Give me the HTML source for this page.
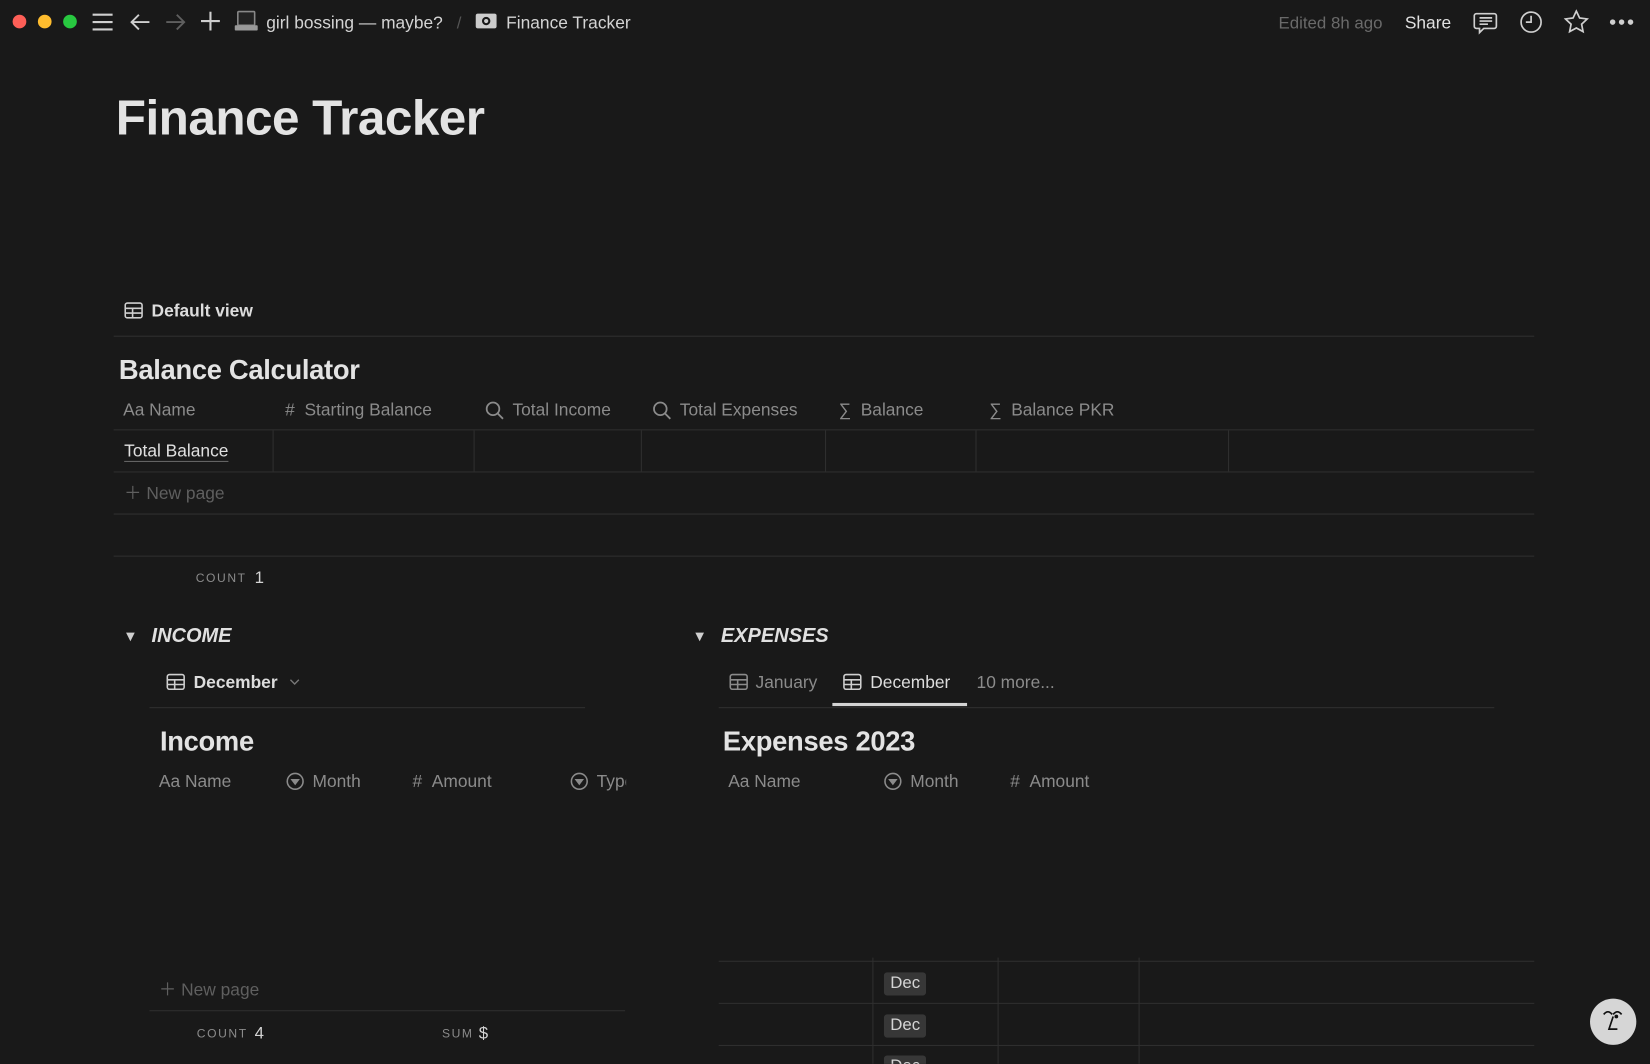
<!DOCTYPE html>
<html><head><meta charset="utf-8"><style>
html,body{margin:0;padding:0;background:#191919;width:1650px;height:1064px;overflow:hidden}
#w{position:absolute;left:0;top:0;width:1568px;height:1011px;overflow:hidden;transform:scale(1.05230);transform-origin:0 0;font-family:"Liberation Sans",sans-serif;color:#d4d4d4}
.a{position:absolute;white-space:nowrap;line-height:1.2;transform:translateY(2px)}
.m{color:#8b8b8b}
.hl{position:absolute;height:1px;background:#2f2f2f}
.vl{position:absolute;width:1px;background:#2f2f2f}
svg{position:absolute}
.dot{position:absolute;width:13px;height:13px;border-radius:50%}
.tag{position:absolute;background:#373737;border-radius:3px;color:#d4d4d4;font-size:16px;padding:2px 6px;line-height:18px;transform:translateY(2px)}
</style></head><body><div id="w">
<div class="dot" style="left:12px;top:14px;background:#fe5f57"></div>
<div class="dot" style="left:36px;top:14px;background:#febc2e"></div>
<div class="dot" style="left:60px;top:14px;background:#28c840"></div>
<svg style="left:87px;top:11px" width="21" height="20" stroke="#cfcfcf" stroke-width="2"><path d="M1 3h19M1 10h19M1 17h19"/></svg>
<svg style="left:123px;top:11px" width="20" height="20" fill="none" stroke="#cfcfcf" stroke-width="1.8"><path d="M19 10H2M9 3l-7 7 7 7"/></svg>
<svg style="left:157px;top:11px" width="20" height="20" fill="none" stroke="#5f5f5f" stroke-width="1.8"><path d="M1 10h17M11 3l7 7-7 7"/></svg>
<svg style="left:191px;top:11px" width="18" height="18" stroke="#cfcfcf" stroke-width="2"><path d="M9 0v18M0 9h18"/></svg>
<svg style="left:223px;top:9px" width="22" height="22"><rect x="3" y="2" width="16" height="13" rx="1" fill="#222" stroke="#888" stroke-width="1.5"/><rect x="0" y="15" width="22" height="5" rx="1" fill="#999"/></svg>
<div class="a" style="left:253px;top:11px;font-size:16.5px">girl bossing — maybe?</div>
<div class="a m" style="left:434px;top:11px;font-size:16px;color:#555">/</div>
<svg style="left:452px;top:12px" width="20" height="16"><rect x="0" y="1" width="20" height="14" rx="2" fill="#ccc"/><ellipse cx="10" cy="8" rx="4" ry="4" fill="#191919"/><circle cx="10" cy="8" r="2" fill="#ccc"/></svg>
<div class="a" style="left:481px;top:11px;font-size:16.5px">Finance Tracker</div>
<div class="a" style="left:1215px;top:11px;font-size:16px;color:#6a6a6a">Edited 8h ago</div>
<div class="a" style="left:1335px;top:11px;font-size:16.5px;color:#e0e0e0">Share</div>
<svg style="left:1400px;top:11px" width="24" height="22" fill="none" stroke="#cfcfcf" stroke-width="1.6"><path d="M3 2h17a2 2 0 0 1 2 2v10a2 2 0 0 1-2 2H10l-4 4v-4H3a2 2 0 0 1-2-2V4a2 2 0 0 1 2-2z"/><path d="M6 6h12M6 9h12M6 12h8"/></svg>
<svg style="left:1444px;top:10px" width="22" height="22" fill="none" stroke="#cfcfcf" stroke-width="1.6"><circle cx="11" cy="11" r="9.5"/><path d="M11 5v6H6"/></svg>
<svg style="left:1486px;top:9px" width="24" height="23" fill="none" stroke="#cfcfcf" stroke-width="1.6"><path d="M12 1.5l3.1 6.6 7.2.9-5.3 5 1.4 7.1L12 17.6l-6.4 3.5 1.4-7.1-5.3-5 7.2-.9z"/></svg>
<svg style="left:1529px;top:17px" width="24" height="8" fill="#cfcfcf"><circle cx="3.5" cy="4" r="2.6"/><circle cx="12" cy="4" r="2.6"/><circle cx="20.5" cy="4" r="2.6"/></svg>

<div class="a" style="left:110px;top:82px;font-size:47px;font-weight:bold;color:#e3e3e3;letter-spacing:-0.5px">Finance Tracker</div>

<svg style="left:118px;top:287px" width="18" height="16" fill="none" stroke="#cfcfcf" stroke-width="1.5"><rect x="1" y="1" width="16" height="14" rx="2"/><path d="M1 6h16M1 10.5h16M8 6v9"/></svg>
<div class="a" style="left:144px;top:285px;font-size:16.5px;font-weight:bold;color:#ddd">Default view</div>
<div class="hl" style="left:108px;top:319px;width:1350px"></div>

<div class="a" style="left:113px;top:334px;font-size:26px;font-weight:bold;color:#e3e3e3;letter-spacing:-0.3px">Balance Calculator</div>
<div class="a m" style="left:117px;top:379px;font-size:16.5px">Aa Name</div>
<div class="a m" style="left:271px;top:379px;font-size:16.5px"># &nbsp;Starting Balance</div>
<svg style="left:461px;top:381px" width="18" height="18" fill="none" stroke="#8b8b8b" stroke-width="1.7"><circle cx="7.5" cy="7.5" r="6"/><path d="M12 12l5 5"/></svg>
<div class="a m" style="left:487px;top:379px;font-size:16.5px">Total Income</div>
<svg style="left:620px;top:381px" width="18" height="18" fill="none" stroke="#8b8b8b" stroke-width="1.7"><circle cx="7.5" cy="7.5" r="6"/><path d="M12 12l5 5"/></svg>
<div class="a m" style="left:646px;top:379px;font-size:16.5px">Total Expenses</div>
<div class="a m" style="left:797px;top:379px;font-size:16.5px">∑ &nbsp;Balance</div>
<div class="a m" style="left:940px;top:379px;font-size:16.5px">∑ &nbsp;Balance PKR</div>
<div class="hl" style="left:108px;top:408px;width:1350px"></div>
<div class="vl" style="left:259px;top:409px;height:39px"></div>
<div class="vl" style="left:450px;top:409px;height:39px"></div>
<div class="vl" style="left:609px;top:409px;height:39px"></div>
<div class="vl" style="left:784px;top:409px;height:39px"></div>
<div class="vl" style="left:927px;top:409px;height:39px"></div>
<div class="vl" style="left:1167px;top:409px;height:39px"></div>
<div class="a" style="left:118px;top:418px;font-size:16.5px;color:#e0e0e0;text-decoration:underline;text-decoration-color:#666;text-underline-offset:4px">Total Balance</div>
<div class="hl" style="left:108px;top:448px;width:1350px"></div>
<div class="a" style="left:118px;top:458px;font-size:16.5px;color:#5f5f5f">＋ New page</div>
<div class="hl" style="left:108px;top:488px;width:1350px"></div>
<div class="hl" style="left:108px;top:528px;width:1350px"></div>
<div class="a" style="left:186px;top:542px;font-size:11.5px;letter-spacing:1.5px;color:#8b8b8b">COUNT</div>
<div class="a" style="left:242px;top:538px;font-size:16px;color:#d4d4d4">1</div>

<div class="a" style="left:117px;top:594px;font-size:14px;color:#cfcfcf">▼</div>
<div class="a" style="left:144px;top:592px;font-size:19px;font-weight:bold;font-style:italic;color:#e0e0e0">INCOME</div>
<svg style="left:158px;top:640px" width="18" height="16" fill="none" stroke="#cfcfcf" stroke-width="1.5"><rect x="1" y="1" width="16" height="14" rx="2"/><path d="M1 6h16M1 10.5h16M8 6v9"/></svg>
<div class="a" style="left:184px;top:638px;font-size:16.5px;font-weight:bold;color:#ddd">December</div>
<svg style="left:275px;top:645px" width="10" height="7" fill="none" stroke="#777" stroke-width="1.3"><path d="M1 1l4 4 4-4"/></svg>
<div class="hl" style="left:142px;top:672px;width:414px"></div>
<div class="a" style="left:152px;top:687px;font-size:26px;font-weight:bold;color:#e3e3e3;letter-spacing:-0.3px">Income</div>
<div class="a m" style="left:151px;top:732px;font-size:16.5px">Aa Name</div>
<svg style="left:272px;top:734px" width="17" height="17" fill="none" stroke="#8b8b8b" stroke-width="1.5"><circle cx="8.5" cy="8.5" r="7.5"/><path d="M5.5 7h6l-3 4z" fill="#8b8b8b"/></svg>
<div class="a m" style="left:297px;top:732px;font-size:16.5px">Month</div>
<div class="a m" style="left:392px;top:732px;font-size:16.5px"># &nbsp;Amount</div>
<svg style="left:542px;top:734px" width="17" height="17" fill="none" stroke="#8b8b8b" stroke-width="1.5"><circle cx="8.5" cy="8.5" r="7.5"/><path d="M5.5 7h6l-3 4z" fill="#8b8b8b"/></svg>
<div class="a m" style="left:567px;top:732px;font-size:16.5px;width:28px;overflow:hidden">Type</div>
<div class="a" style="left:151px;top:930px;font-size:16.5px;color:#5f5f5f">＋ New page</div>
<div class="hl" style="left:142px;top:960px;width:452px"></div>
<div class="a" style="left:187px;top:975px;font-size:11.5px;letter-spacing:1.5px;color:#8b8b8b">COUNT</div>
<div class="a" style="left:242px;top:971px;font-size:16px">4</div>
<div class="a" style="left:420px;top:975px;font-size:11.5px;letter-spacing:1.5px;color:#8b8b8b">SUM</div>
<div class="a" style="left:455px;top:971px;font-size:16px">$</div>

<div class="a" style="left:658px;top:594px;font-size:14px;color:#cfcfcf">▼</div>
<div class="a" style="left:685px;top:592px;font-size:19px;font-weight:bold;font-style:italic;color:#e0e0e0">EXPENSES</div>
<svg style="left:693px;top:640px" width="18" height="16" fill="none" stroke="#8b8b8b" stroke-width="1.5"><rect x="1" y="1" width="16" height="14" rx="2"/><path d="M1 6h16M1 10.5h16M8 6v9"/></svg>
<div class="a m" style="left:718px;top:638px;font-size:16.5px">January</div>
<svg style="left:801px;top:640px" width="18" height="16" fill="none" stroke="#cfcfcf" stroke-width="1.5"><rect x="1" y="1" width="16" height="14" rx="2"/><path d="M1 6h16M1 10.5h16M8 6v9"/></svg>
<div class="a" style="left:827px;top:638px;font-size:16.5px;color:#ddd">December</div>
<div class="a m" style="left:928px;top:638px;font-size:16.5px">10 more...</div>
<div class="hl" style="left:683px;top:672px;width:737px"></div>
<div style="position:absolute;left:791px;top:668px;width:128px;height:3px;background:#d4d4d4"></div>
<div class="a" style="left:687px;top:687px;font-size:26px;font-weight:bold;color:#e3e3e3;letter-spacing:-0.3px">Expenses 2023</div>
<div class="a m" style="left:692px;top:732px;font-size:16.5px">Aa Name</div>
<svg style="left:840px;top:734px" width="17" height="17" fill="none" stroke="#8b8b8b" stroke-width="1.5"><circle cx="8.5" cy="8.5" r="7.5"/><path d="M5.5 7h6l-3 4z" fill="#8b8b8b"/></svg>
<div class="a m" style="left:865px;top:732px;font-size:16.5px">Month</div>
<div class="a m" style="left:960px;top:732px;font-size:16.5px"># &nbsp;Amount</div>
<div class="hl" style="left:683px;top:913px;width:775px"></div>
<div class="hl" style="left:683px;top:953px;width:775px"></div>
<div class="hl" style="left:683px;top:993px;width:775px"></div>
<div class="vl" style="left:829px;top:910px;height:101px"></div>
<div class="vl" style="left:948px;top:910px;height:101px"></div>
<div class="vl" style="left:1082px;top:910px;height:101px"></div>
<div class="tag" style="left:840px;top:922px">Dec</div>
<div class="tag" style="left:840px;top:962px">Dec</div>
<div class="tag" style="left:840px;top:1001px">Dec</div>

<div style="position:absolute;left:1511px;top:949px;width:44px;height:44px;border-radius:50%;background:#d6d6d6"></div>
<svg style="left:1521px;top:958px" width="24" height="26" fill="none" stroke="#111" stroke-width="1.6"><path d="M3 6q4-5 8 0M12 6q4-5 8 0"/><circle cx="15" cy="8" r="1" fill="#111"/><path d="M12 8L8 20h8"/></svg>
</div></body></html>
